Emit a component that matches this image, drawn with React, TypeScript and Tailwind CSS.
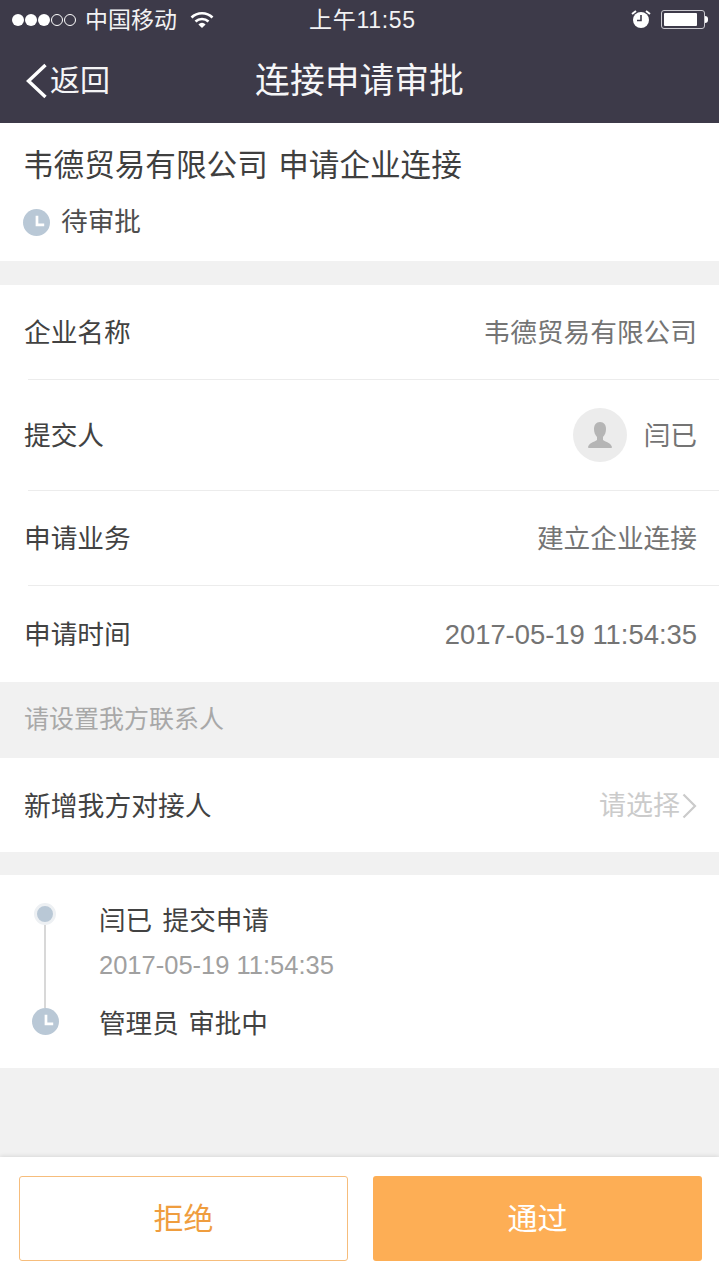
const cjk = 'font-["Liberation_Sans","Noto_Sans_CJK_SC",sans-serif]'

function ClockDot({ size }: { size: string }) {
  return (
    <svg viewBox="0 0 28 28" className={size}>
      <circle cx="14" cy="14" r="14" fill="#b9c8d6" />
      <path d="M14.5 7v9.5H22" fill="none" stroke="#fff" strokeWidth="2.8" />
    </svg>
  )
}

function Row({ label, value, height, line = true }: { label: string; value: React.ReactNode; height: string; line?: boolean }) {
  return (
    <div className={`relative flex items-center justify-between pl-6 pr-[22px] ${height}`}>
      <span className="pt-[2px] text-[26.7px] text-[#424242]">{label}</span>
      {value}
      {line && <div className="absolute bottom-0 left-[28px] right-0 h-px bg-[#ececec]" />}
    </div>
  )
}

export default function App() {
  return (
    <div className={`flex h-[1280px] w-[719px] flex-col overflow-hidden bg-[#f1f1f1] ${cjk}`}>
      {/* Status + nav */}
      <div className="h-[123px] bg-[#3d3a49] text-white">
        <div className="relative flex h-10 items-center pl-3 text-[23px] text-[#f2f2f4]">
          <div className="flex items-center gap-[1px]">
            {[0, 1, 2].map(i => <span key={i} className="h-3 w-3 rounded-full bg-white" />)}
            {[0, 1].map(i => <span key={i} className="h-3 w-3 rounded-full border border-white" />)}
          </div>
          <span className="ml-[9px]">中国移动</span>
          <svg viewBox="0 0 24 18" className="ml-[13px] h-[18px] w-6" fill="none" stroke="#fff" strokeWidth="2.6">
            <path d="M1.5 6.5a15 15 0 0 1 21 0" />
            <path d="M5.5 10.5a9.5 9.5 0 0 1 13 0" />
            <path d="M12 17l-3.6-3.6a5 5 0 0 1 7.2 0z" fill="#fff" stroke="none" />
          </svg>
          <span className="absolute left-[309px] top-[3px] text-[23px] tracking-[0.7px]">上午11:55</span>
          <svg viewBox="0 0 20 20" className="absolute left-[631px] top-[9px] h-5 w-5">
            <path d="M1 5l4-3M19 5l-4-3" stroke="#fff" strokeWidth="2" />
            <circle cx="10" cy="11" r="8" fill="#fff" />
            <path d="M10 6v5.5H6" fill="none" stroke="#3d3a49" strokeWidth="1.6" />
          </svg>
          <div className="absolute left-[661px] top-[10px] flex items-center">
            <div className="h-[19px] w-[44px] rounded-[3px] border border-[#c9c8ce] p-[2px]">
              <div className="h-full w-[33px] rounded-[1px] bg-white" />
            </div>
            <div className="h-[7px] w-[3px] rounded-r-sm bg-white" />
          </div>
        </div>
        <div className="relative flex h-[83px] items-center justify-center">
          <div className="absolute left-[25px] top-[23px] flex items-center">
            <svg viewBox="0 0 23 36" className="h-9 w-[23px]" fill="none" stroke="#fff" strokeWidth="3.4">
              <path d="M20.5 2L3.5 18l17 16" />
            </svg>
            <span className="ml-[2px] text-[30px] leading-9 text-[#f4f4f6]">返回</span>
          </div>
          <span className="text-[34.8px] text-[#f6f6f8]">连接申请审批</span>
        </div>
      </div>

      {/* Heading */}
      <div className="h-[138px] bg-white pl-6 pt-[20px]">
        <div className="-ml-[1px] text-[30.6px] leading-[44px] text-[#3f3f3f] [word-spacing:2px]">韦德贸易有限公司 申请企业连接</div>
        <div className="mt-[17px] flex items-center">
          <ClockDot size="h-[27px] w-[27px] -ml-[1px]" />
          <span className="ml-[11px] text-[26.7px] leading-[36px] text-[#4e4e4e]">待审批</span>
        </div>
      </div>

      {/* Details */}
      <div className="mt-6 bg-white">
        <Row label="企业名称" height="h-[95px]" value={<span className="pt-[2px] text-[26.7px] text-[#747474]">韦德贸易有限公司</span>} />
        <Row
          label="提交人"
          height="h-[111px]"
          value={
            <div className="mb-[2px] flex items-center">
              <div className="flex h-[54px] w-[54px] items-end justify-center rounded-full bg-[#ececec] pb-[13px]">
                <svg viewBox="0 0 28 28" className="h-7 w-7" fill="#b5b5b5">
                  <path d="M14 1c-4 0-6 3-6 7 0 3 1 6 3 8v3c-3 2-8 3-9 7 0 1 1 1 2 1h20c1 0 2 0 2-1-1-4-6-5-9-7v-3c2-2 3-5 3-8 0-4-2-7-6-7z" />
                </svg>
              </div>
              <span className="ml-[17px] pt-[4px] text-[26.7px] text-[#747474]">闫已</span>
            </div>
          }
        />
        <Row label="申请业务" height="h-[95px]" value={<span className="pt-[2px] text-[26.7px] text-[#747474]">建立企业连接</span>} />
        <Row label="申请时间" height="h-[96px]" line={false} value={<span className="pt-[1px] text-[27.4px] text-[#747474]">2017-05-19 11:54:35</span>} />
      </div>

      {/* Contact section */}
      <div className="flex h-[76px] items-center pl-6 text-[25px] text-[#a8a8a8]">请设置我方联系人</div>
      <div className="flex h-[94px] items-center justify-between bg-white pl-6 pr-[22px]">
        <span className="pt-[4px] text-[26.8px] text-[#424242]">新增我方对接人</span>
        <div className="flex items-center pt-[2px] text-[#cbcbcb]">
          <span className="text-[27px]">请选择</span>
          <svg viewBox="0 0 15 26" className="ml-[2px] h-[26px] w-[15px]" fill="none" stroke="currentColor" strokeWidth="2.2">
            <path d="M1.5 1.5L13 13 1.5 24.5" />
          </svg>
        </div>
      </div>

      {/* Timeline */}
      <div className="mt-[23px] flex h-[193px] bg-white pl-[31px]">
        <div className="flex w-[27px] flex-col items-center pt-[28px]">
          <span className="h-[22px] w-[22px] shrink-0 rounded-full border-[3px] border-[#edf0f3] bg-[#b9c8d6]" />
          <span className="h-[83px] w-[2px] bg-[#d8d8d8]" />
          <ClockDot size="ml-[2px] h-[27px] w-[27px] shrink-0" />
        </div>
        <div className="ml-[41px] pt-[27px]">
          <div className="text-[26.6px] leading-[38px] text-[#424242] [word-spacing:3px]">闫已 提交申请</div>
          <div className="mt-[8px] text-[25.5px] leading-[34px] text-[#a0a0a0]">2017-05-19 11:54:35</div>
          <div className="mt-[23px] text-[26.6px] leading-[38px] text-[#424242] [word-spacing:2px]">管理员 审批中</div>
        </div>
      </div>

      <div className="flex-1" />

      {/* Footer buttons */}
      <div className="flex h-[123px] gap-[25px] bg-white pl-[19px] pt-[19px] shadow-[0_-1px_4px_rgba(0,0,0,0.10)]">
        <button className="h-[85px] w-[329px] rounded-[3px] border border-[#f6bd7c] bg-white text-[30px] text-[#ef9d3e]">拒绝</button>
        <button className="h-[85px] w-[329px] rounded-[3px] bg-[#fdae55] text-[30px] text-white">通过</button>
      </div>
    </div>
  )
}
